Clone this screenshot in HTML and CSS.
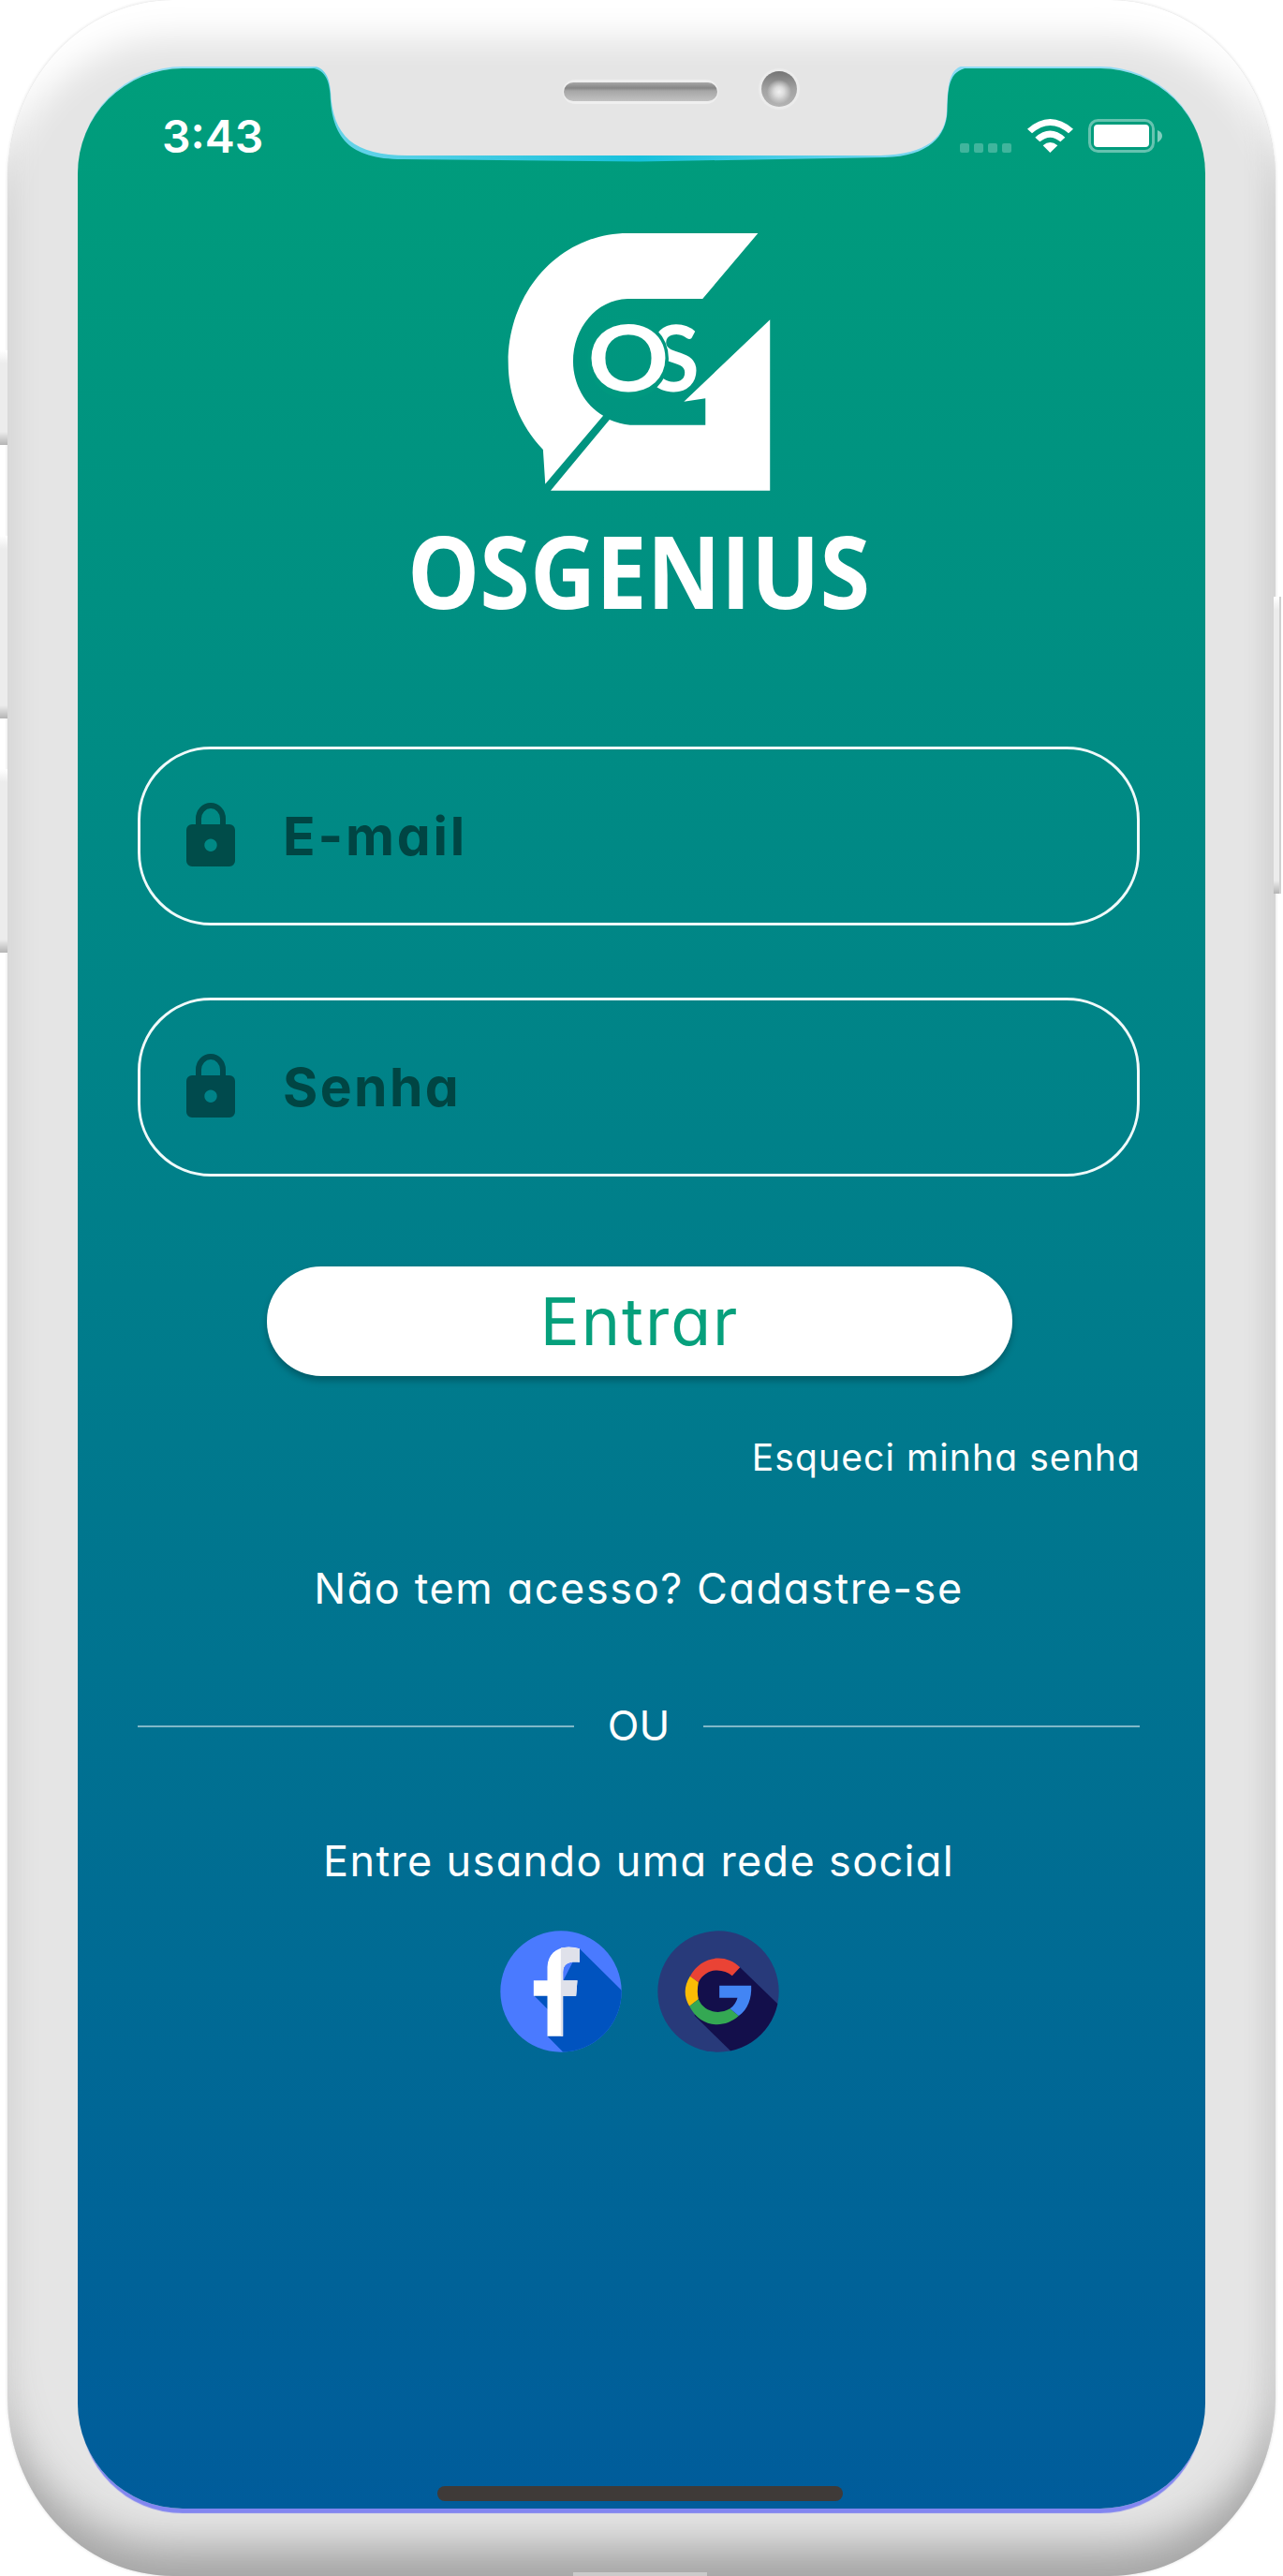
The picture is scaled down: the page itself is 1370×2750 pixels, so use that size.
FILE: index.html
```html
<!DOCTYPE html>
<html lang="pt-br">

<head>
  <meta charset="UTF-8">
  <meta name="viewport" content="width=device-width, initial-scale=1.0">
  <title>OSGENIUS</title>
  <link rel="stylesheet" href="styles.css">
</head>

<body>
  <div class="phone">
    <span class="side-button mute"></span>
    <span class="side-button volume-up"></span>
    <span class="side-button volume-down"></span>
    <span class="side-button power"></span>
    <span class="port"></span>

    <div class="screen">
      <svg class="notch" width="740" height="180" viewBox="315 0 740 180">
        <defs>
          <linearGradient id="speaker" x1="0" y1="0" x2="0" y2="1">
            <stop offset="0" stop-color="#a8a8a8" />
            <stop offset=".3" stop-color="#868686" />
            <stop offset=".45" stop-color="#a6a6a6" />
            <stop offset="1" stop-color="#c2c2c2" />
          </linearGradient>
          <linearGradient id="camera" x1="0" y1="0" x2="0" y2="1">
            <stop offset="0" stop-color="#747474" />
            <stop offset=".5" stop-color="#a2a2a2" />
            <stop offset="1" stop-color="#b4b4b4" />
          </linearGradient>
          <radialGradient id="lens">
            <stop offset="0" stop-color="#f0f0f0" />
            <stop offset=".4" stop-color="#dcdcdc" />
            <stop offset="1" stop-color="#dcdcdc" stop-opacity="0" />
          </radialGradient>
          <linearGradient id="edge" x1="0" y1="0" x2="1" y2="0">
            <stop offset="0" stop-color="#6fd6ea" />
            <stop offset=".5" stop-color="#17c1dc" />
            <stop offset="1" stop-color="#8fdcf5" />
          </linearGradient>
        </defs>
        <path fill="url(#edge)" d="M326 72C345 72 351 82 352.500 100C354 146 372 170 430 170L683 172.500L945 168C992 167 1011 145 1011.500 118C1012 90 1014 73 1038 72Z" />
        <path fill="#e5e5e5" d="M328 69C347 70 351.500 82 353 97C355 146 378 166 435 166L940 166C990 165 1010 146 1011 118C1012 86 1014 71 1034 69Z" />
        <rect x="601" y="85" width="166" height="26" rx="13" fill="#efefef" />
        <rect x="602" y="88" width="164" height="20" rx="10" fill="url(#speaker)" />
        <circle cx="832" cy="95" r="22" fill="#ececec" />
        <circle cx="832" cy="95" r="19" fill="url(#camera)" />
        <circle cx="832" cy="98" r="13" fill="url(#lens)" />
      </svg>

      <div class="status-bar">
        <div class="time">3:43</div>
        <div class="status-icons">
          <div class="signal"><i></i><i></i><i></i><i></i></div>
          <svg class="wifi" width="49" height="36" viewBox="0 0 147 108" fill="#fff">
            <path d="M0 32Q73-32 147 32L132 46Q73-4 15 46Z" />
            <path d="M25 59Q73 16 121 59L106 73Q73 45 40 73Z" />
            <path d="M50 85Q73 65 97 85L73 108Z" />
          </svg>
          <svg class="battery" width="80" height="36" viewBox="0 0 80 36">
            <rect x="1.500" y="1.500" width="68" height="33" rx="9" fill="none" stroke="#fff" stroke-opacity=".4" stroke-width="3" />
            <rect x="6" y="6" width="59" height="24" rx="4" fill="#fff" />
            <path d="M74 12Q79 14 79 18T74 25Z" fill="#fff" fill-opacity=".5" />
          </svg>
        </div>
      </div>

      <svg class="logo" width="530" height="460" viewBox="-3 0 530 460">
        <g transform="scale(.338 .33333)" fill="#fff">
          <path d="M740 57H1152L977 267H740C640 270 568 362 568 468C568 540 606 608 663 641L480 860L473 750C400 670 363 580 363 470C363 240 530 57 740 57Z" />
          <path d="M1190 334V881H497L683 654Q715 668 748 671H986V586L918 596Z" />
        </g>
        <text class="logo-os" x="274" y="187.500" textLength="53" lengthAdjust="spacingAndGlyphs">S</text>
        <circle class="logo-cut" cx="250.500" cy="153" r="39" />
        <text class="logo-os" x="207.500" y="187.500" textLength="87" lengthAdjust="spacingAndGlyphs">O</text>
        <text class="logo-name" x="15" y="419.500" textLength="494" lengthAdjust="spacingAndGlyphs">OSGENIUS</text>
      </svg>

      <div class="form">
        <div class="input">
          <svg class="lock" width="52" height="68" viewBox="0 0 52 68">
            <path d="M13 26V17a13 14 0 0 1 26 0v9" fill="none" stroke="#004c49" stroke-width="6" />
            <path fill="#004c49" fill-rule="evenodd" d="M6 23H46a6 6 0 0 1 6 6V62a6 6 0 0 1-6 6H6a6 6 0 0 1-6-6V29a6 6 0 0 1 6-6ZM26 38.500a6.700 6.700 0 1 0 .01 0Z" />
          </svg>
          <span class="email">E-mail</span>
        </div>
        <div class="input">
          <svg class="lock" width="52" height="68" viewBox="0 0 52 68">
            <path d="M13 26V17a13 14 0 0 1 26 0v9" fill="none" stroke="#004a4d" stroke-width="6" />
            <path fill="#004a4d" fill-rule="evenodd" d="M6 23H46a6 6 0 0 1 6 6V62a6 6 0 0 1-6 6H6a6 6 0 0 1-6-6V29a6 6 0 0 1 6-6ZM26 38.500a6.700 6.700 0 1 0 .01 0Z" />
          </svg>
          <span class="senha">Senha</span>
        </div>
        <div class="button"><span>Entrar</span></div>
        <div class="forgot"><span>Esqueci minha senha</span></div>
        <div class="register"><span>Não tem acesso? Cadastre-se</span></div>
        <div class="divider"><span>OU</span></div>
        <div class="social-text"><span>Entre usando uma rede social</span></div>

        <div class="social">
          <svg width="130" height="130" viewBox="72 62 389 390">
            <clipPath id="fb"><circle cx="266.500" cy="257" r="194" /></clipPath>
            <circle cx="266.500" cy="257" r="194" fill="#4a7aff" />
            <path clip-path="url(#fb)" fill="#0053bf" d="M326 120L480 272V470H292L224 401V314L180 270L270 230Z" />
            <path fill="#fff" d="M223 400V271H179V222H223V178C225 138 250 117 285 115Q308 114 326 120V163C296 160 274 164 273 195V222H319L315 271H273V400Z" />
            <path fill="#dfe1ea" d="M266 117Q296 112 326 120V163C296 160 274 164 273 195V222H319L315 271H273V400H266Z" />
          </svg>
          <svg width="130" height="130" viewBox="576 62 389 390">
            <clipPath id="gg"><circle cx="770.500" cy="257" r="194" /></clipPath>
            <circle cx="770.500" cy="257" r="194" fill="#283a7a" />
            <path clip-path="url(#gg)" fill="#130f4b" d="M840 180L1000 335V470H833L695 335L690 230L770 170Z" />
            <path fill="#ea4335" d="M680 208C715 143 794 132 840 180L815 207C785 182 731 180 707 228Z" />
            <path fill="#fbbc05" d="M680 208L707 228Q701 257 707 282L678 304Q650 257 680 208Z" />
            <path fill="#34a853" d="M678 304L707 282C724 323 773 333 808 312L836 335C786 380 711 370 678 304Z" />
            <path fill="#4285f4" d="M774 238H876C878 278 866 314 836 335L808 312Q826 299 832 277H774Z" />
          </svg>
        </div>
      </div>

      <div class="home-bar"></div>
    </div>
  </div>
</body>

</html>
```
FILE: styles.css
```css
* {
  box-sizing: border-box;
}

body {
  margin: 0;
  background: #fff;
  font-family: Inter, "Liberation Sans", sans-serif;
  font-feature-settings: "cv11";
  overflow: hidden;
}

/* --- Phone frame --- */
.phone {
  position: relative;
  height: 2750px;
  margin: 0 8px;
  padding: 73px 75px 72px;
  border-radius: 177px / 192px;
  background: #e5e5e5;
  box-shadow: inset 0 55px 36px -15px #fff,
    inset 0 -46px 44px -14px #a6a6a6,
    inset 10px 0 16px -6px #dcdcdc,
    inset -16px 0 20px -6px #d6d6d6,
    0 0 3px 1px #ececec;
}

.side-button {
  position: absolute;
  left: -8px;
  width: 8px;
  background: linear-gradient(#fff, #ececec 14px, #ececec calc(100% - 14px), #b4b4b4);
}

.mute {
  top: 374px;
  height: 101px;
}

.volume-up {
  top: 572px;
  height: 195px;
}

.volume-down {
  top: 821px;
  height: 196px;
}

.power {
  top: 637px;
  left: 1352px;
  height: 317px;
  border-right: 2px solid #d0d0d0;
}

.port {
  position: absolute;
  bottom: 0;
  left: 604px;
  width: 143px;
  height: 4px;
  background: #cacaca;
}

/* --- Screen --- */
.screen {
  position: relative;
  display: flex;
  flex-direction: column;
  width: 1204px;
  height: 2605px;
  padding-top: 48px;
  border-radius: 112px;
  background: linear-gradient(#009e7b, #005c9b);
  box-shadow: 0 -3px 0 -1px #8edcf5, 0 8px 1px -3px #8286f0;
}

.notch {
  position: absolute;
  top: -73px;
  left: 232px;
}

.status-bar {
  display: flex;
  justify-content: space-between;
  align-items: center;
  height: 49px;
  padding: 0 45px 0 90px;
  color: #fff;
}

.time {
  font-size: 48px;
  font-weight: 600;
}

.status-icons {
  display: flex;
  align-items: flex-end;
  margin-top: -1px;
}

.signal {
  display: flex;
  gap: 5px;
  margin-right: 17px;
}

.signal i {
  width: 10px;
  height: 10px;
  border-radius: 2px;
  background: rgba(255, 255, 255, 0.25);
}

.battery {
  margin-left: 16px;
}

.logo {
  align-self: center;
  margin: 60px 6px 0 0;
}

.logo-os {
  font-family: Lato, sans-serif;
  font-size: 98px;
  font-weight: 700;
  fill: #fff;
}

.logo-cut {
  fill: none;
  stroke: #00987f;
  stroke-width: 9px;
}

.logo-name {
  font-family: "Open Sans", sans-serif;
  font-size: 107px;
  font-weight: 700;
  fill: #fff;
}

/* --- Form --- */
.form {
  display: flex;
  flex-direction: column;
  margin: 107px 70px 0 64px;
  color: #fff;
}

.input {
  display: flex;
  align-items: center;
  height: 191px;
  margin-bottom: 77px;
  padding-left: 49px;
  border: 3px solid #f0fafa;
  border-radius: 78px;
  color: #004543;
  font-size: 57px;
  font-weight: 700;
}

.lock {
  margin: -3px 51px 0 0;
}

.email {
  letter-spacing: 2.8px;
}

.senha {
  letter-spacing: 2.4px;
}

.button {
  align-self: center;
  width: 796px;
  height: 117px;
  margin: 19px 0 0 2px;
  border-radius: 58px;
  background: #fff;
  box-shadow: 0 5px 7px rgba(0, 0, 0, 0.25);
  color: #06a07c;
  font-size: 70px;
  letter-spacing: 2px;
  line-height: 117px;
  text-align: center;
}

.forgot {
  margin: 62px -1px 0 0;
  font-size: 39px;
  letter-spacing: 1.1px;
  line-height: 50px;
  text-align: right;
}

.register,
.divider,
.social-text {
  margin-top: 85px;
  font-size: 45px;
  letter-spacing: 1.6px;
  line-height: 60px;
  text-align: center;
}

.social-text {
  letter-spacing: 1.35px;
}

.divider {
  display: flex;
  justify-content: space-between;
  align-items: center;
  font-size: 44px;
  letter-spacing: 0;
  margin-top: 86px;
}

.divider::before,
.divider::after {
  content: "";
  width: 466px;
  height: 2px;
  margin-top: 1px;
  background: rgba(255, 255, 255, 0.5);
}

.social {
  display: flex;
  justify-content: center;
  gap: 38px;
  margin: 44px 0 0 2px;
}

.home-bar {
  align-self: center;
  width: 433px;
  height: 16px;
  margin: auto 3px 8px 0;
  border-radius: 8px;
  background: #3f3a38;
}
```
